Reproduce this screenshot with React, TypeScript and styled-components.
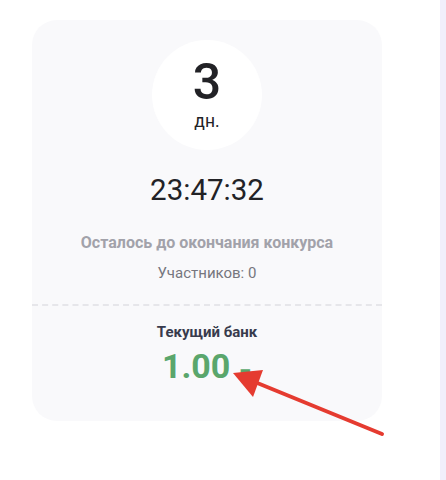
import React from 'react';
import styled, { createGlobalStyle } from 'styled-components';

const GlobalStyle = createGlobalStyle`
  html, body {
    margin: 0;
    padding: 0;
    background: #ffffff;
    font-family: Roboto, "Liberation Sans", sans-serif;
  }
`;

const Page = styled.div`
  position: relative;
  display: flex;
  width: 446px;
  height: 480px;
  overflow: hidden;
`;

const Main = styled.main`
  flex: 1;
  padding: 20px 0 0 32px;
`;

const SideStrip = styled.aside`
  width: 6px;
  background: #f1effb;
`;

const Card = styled.section`
  width: 350px;
  height: 401px;
  box-sizing: border-box;
  padding-top: 20px;
  border-radius: 25px;
  background: #f9f9fb;
  display: flex;
  flex-direction: column;
  align-items: center;
`;

const DaysCircle = styled.div`
  width: 110px;
  height: 110px;
  border-radius: 50%;
  background: #ffffff;
  display: flex;
  flex-direction: column;
  align-items: center;
  justify-content: center;
  color: #222226;
`;

const DaysNumber = styled.div`
  font-size: 50px;
  font-weight: 500;
  line-height: 42px;
  margin-top: 2px;
`;

const DaysUnit = styled.div`
  font-size: 17.5px;
  font-weight: 400;
  line-height: 20px;
  margin-top: 8px;
`;

const Timer = styled.div`
  margin-top: 22px;
  font-size: 29.5px;
  line-height: 36px;
  color: #222226;
`;

const Caption = styled.div`
  margin-top: 25px;
  font-size: 16px;
  font-weight: 700;
  line-height: 20px;
  color: #a2a2aa;
`;

const Participants = styled.div`
  margin-top: 11px;
  font-size: 15px;
  line-height: 18px;
  color: #76767e;
`;

const Divider = styled.hr`
  align-self: stretch;
  margin: 22px 0 0;
  border: none;
  border-top: 2px dashed #e6e6ea;
`;

const BankLabel = styled.div`
  margin-top: 17px;
  font-size: 15px;
  font-weight: 700;
  line-height: 18px;
  color: #383b4d;
`;

const BankValue = styled.div`
  margin-top: 5px;
  font-size: 34px;
  font-weight: 700;
  line-height: 40px;
  color: #5aa66c;
  white-space: pre;
`;

const Currency = styled.span`
  vertical-align: -3px;
`;

const ArrowOverlay = styled.svg`
  position: absolute;
  left: 0;
  top: 0;
  pointer-events: none;
`;

export default function App() {
  return (
    <>
      <GlobalStyle />
      <Page>
        <Main>
          <Card>
            <DaysCircle>
              <DaysNumber>3</DaysNumber>
              <DaysUnit>дн.</DaysUnit>
            </DaysCircle>
            <Timer>23:47:32</Timer>
            <Caption>Осталось до окончания конкурса</Caption>
            <Participants>Участников: 0</Participants>
            <Divider />
            <BankLabel>Текущий банк</BankLabel>
            <BankValue>
              1.00 <Currency>-</Currency>
            </BankValue>
          </Card>
        </Main>
        <SideStrip />
        <ArrowOverlay width="446" height="480" viewBox="0 0 446 480">
          <line x1="382" y1="434" x2="250" y2="380" stroke="#e53b30" strokeWidth="4" strokeLinecap="round" />
          <polygon points="233,373 263,370 253,397" fill="#e53b30" />
        </ArrowOverlay>
      </Page>
    </>
  );
}
